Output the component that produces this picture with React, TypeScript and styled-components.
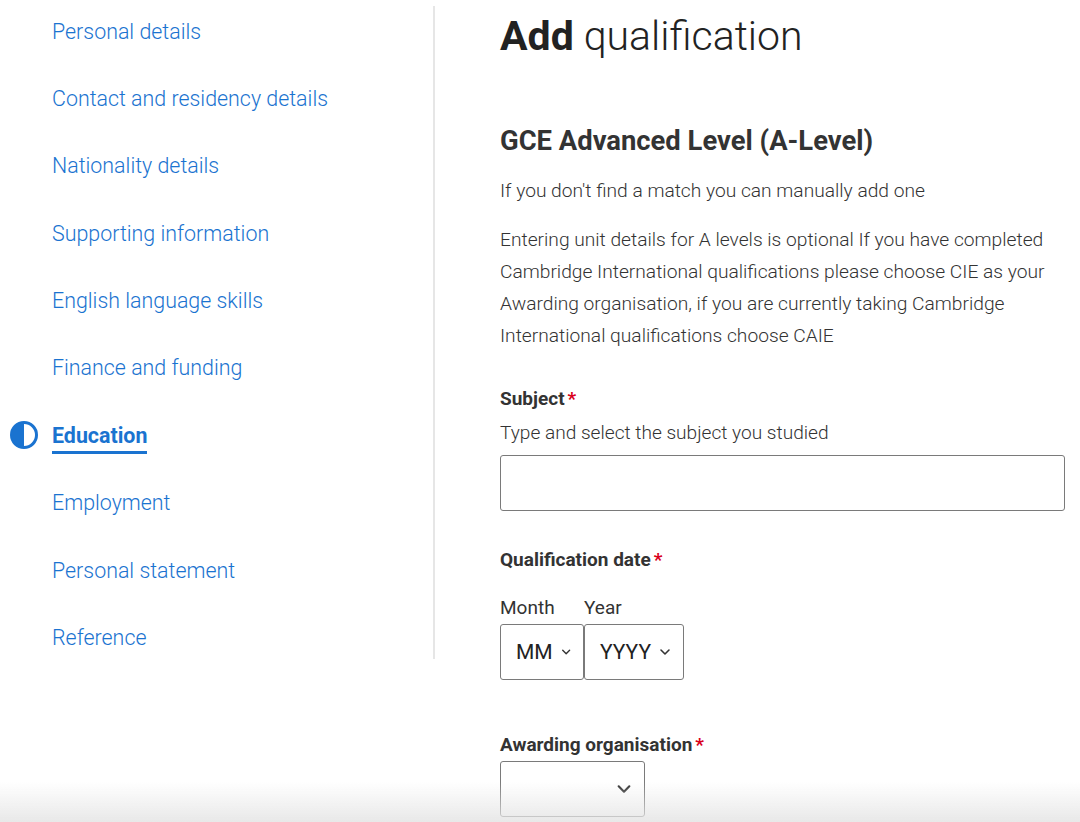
import React from "react";
import styled, { createGlobalStyle } from "styled-components";

const Global = createGlobalStyle`
  html, body { margin: 0; padding: 0; background: #fff; }
  body { font-family: Roboto, "Noto Sans", Arial, sans-serif; color: #333; }
  * { box-sizing: border-box; }
`;

const Page = styled.div`
  display: flex;
  align-items: flex-start;
  width: 1080px;
  height: 822px;
  overflow: hidden;
`;

const Sidebar = styled.nav`
  width: 435px;
  flex: none;
  margin-top: 6px;
  height: 653px;
  border-right: 2px solid #e6e6e6;
  display: flex;
  flex-direction: column;
  gap: 40.4px;
  padding-top: 11.5px;
`;

const NavItem = styled.a<{ $active?: boolean }>`
  display: flex;
  align-items: center;
  height: 27px;
  padding-left: 52px;
  position: relative;
  font-size: 21.4px;
  line-height: 27px;
  color: #1a73d0;
  text-decoration: none;
  font-weight: ${(p) => (p.$active ? 700 : 300)};
`;

const NavLabel = styled.span<{ $active?: boolean }>`
  position: relative;
  ${(p) =>
    p.$active
      ? `&::after { content: ""; position: absolute; left: 0; right: 0; bottom: -5px; height: 3px; background: #1a73d0; }`
      : ""}
`;

const StatusIcon = styled.svg`
  position: absolute;
  left: 9px;
  top: 50%;
  transform: translateY(-50%);
`;

const Main = styled.main`
  flex: 1;
  padding-left: 65px;
  padding-right: 14px;
`;

const Title = styled.h1`
  margin: 12px 0 0;
  font-size: 41px;
  line-height: 48px;
  font-weight: 300;
  color: #222;
  b { font-weight: 700; }
`;

const Subtitle = styled.h2`
  margin: 65px 0 0;
  font-size: 27.4px;
  line-height: 32px;
  font-weight: 700;
  color: #333;
`;

const Para = styled.p`
  margin: 18px 0 0;
  font-size: 19.2px;
  line-height: 32px;
  font-weight: 300;
  color: #333;
  & + & { margin-top: 17px; }
`;

const Field = styled.div<{ $mt: number }>`
  margin-top: ${(p) => p.$mt}px;
  display: flex;
  flex-direction: column;
`;

const Label = styled.div`
  font-size: 19px;
  line-height: 24px;
  font-weight: 700;
  color: #333;
`;

const Req = styled.span`
  color: #d9001b;
  margin-left: 3px;
`;

const Hint = styled.div`
  margin-top: 10px;
  font-size: 19.1px;
  line-height: 24px;
  font-weight: 300;
  color: #333;
`;

const TextInput = styled.div`
  margin-top: 10px;
  width: 565px;
  height: 56px;
  border: 1.5px solid #7a7a7a;
  border-radius: 3px;
`;

const DateRow = styled.div`
  margin-top: 24px;
  display: flex;
`;

const DateCol = styled.div`
  display: flex;
  flex-direction: column;
`;

const SmallLabel = styled.div`
  font-size: 19px;
  line-height: 24px;
  color: #333;
  height: 24px;
`;

const Select = styled.div<{ $w: number }>`
  margin-top: 4px;
  width: ${(p) => p.$w}px;
  height: 56px;
  border: 1.5px solid #7a7a7a;
  border-radius: 3px;
  display: flex;
  align-items: center;
  justify-content: flex-end;
  gap: 8px;
  padding: 0 12px 0 15px;
  font-size: 21px;
  color: #222;
`;

const Value = styled.span`
  flex: 1;
`;

const BottomShade = styled.div`
  position: fixed;
  left: 0;
  right: 0;
  bottom: 0;
  height: 40px;
  background: linear-gradient(to bottom, rgba(230,230,230,0), rgba(228,228,228,0.85));
  pointer-events: none;
`;

const Chevron = ({ size = 12 }: { size?: number }) => (
  <svg width={size} height={size} viewBox="0 0 12 12" fill="none">
    <path d="M2 4l4 4 4-4" stroke="#333" strokeWidth="1.6" strokeLinecap="round" strokeLinejoin="round" />
  </svg>
);

const items = [
  "Personal details",
  "Contact and residency details",
  "Nationality details",
  "Supporting information",
  "English language skills",
  "Finance and funding",
  "Education",
  "Employment",
  "Personal statement",
  "Reference",
];

export default function App() {
  return (
    <>
      <Global />
      <Page>
        <Sidebar>
          {items.map((it) => {
            const active = it === "Education";
            return (
              <NavItem key={it} href="#" $active={active}>
                {active && (
                  <StatusIcon width="30" height="30" viewBox="0 0 30 30">
                    <circle cx="15" cy="15" r="12.5" fill="none" stroke="#1a73d0" strokeWidth="3" />
                    <path d="M15 2.5 A12.5 12.5 0 0 0 15 27.5 Z" fill="#1a73d0" />
                  </StatusIcon>
                )}
                <NavLabel $active={active}>{it}</NavLabel>
              </NavItem>
            );
          })}
        </Sidebar>
        <Main>
          <Title>
            <b>Add</b> qualification
          </Title>
          <Subtitle>GCE Advanced Level (A-Level)</Subtitle>
          <Para>If you don't find a match you can manually add one</Para>
          <Para>
            Entering unit details for A levels is optional If you have completed Cambridge International
            qualifications please choose CIE as your Awarding organisation, if you are currently taking
            Cambridge International qualifications choose CAIE
          </Para>
          <Field $mt={35}>
            <Label>
              Subject<Req>*</Req>
            </Label>
            <Hint>Type and select the subject you studied</Hint>
            <TextInput />
          </Field>
          <Field $mt={37}>
            <Label>
              Qualification date<Req>*</Req>
            </Label>
            <DateRow>
              <DateCol>
                <SmallLabel>Month</SmallLabel>
                <Select $w={84}>
                  <Value>MM</Value>
                  <Chevron />
                </Select>
              </DateCol>
              <DateCol>
                <SmallLabel>Year</SmallLabel>
                <Select $w={100}>
                  <Value>YYYY</Value>
                  <Chevron />
                </Select>
              </DateCol>
            </DateRow>
          </Field>
          <Field $mt={53}>
            <Label>
              Awarding organisation<Req>*</Req>
            </Label>
            <Select $w={145}>
              <Chevron size={16} />
            </Select>
          </Field>
        </Main>
      </Page>
      <BottomShade />
    </>
  );
}
